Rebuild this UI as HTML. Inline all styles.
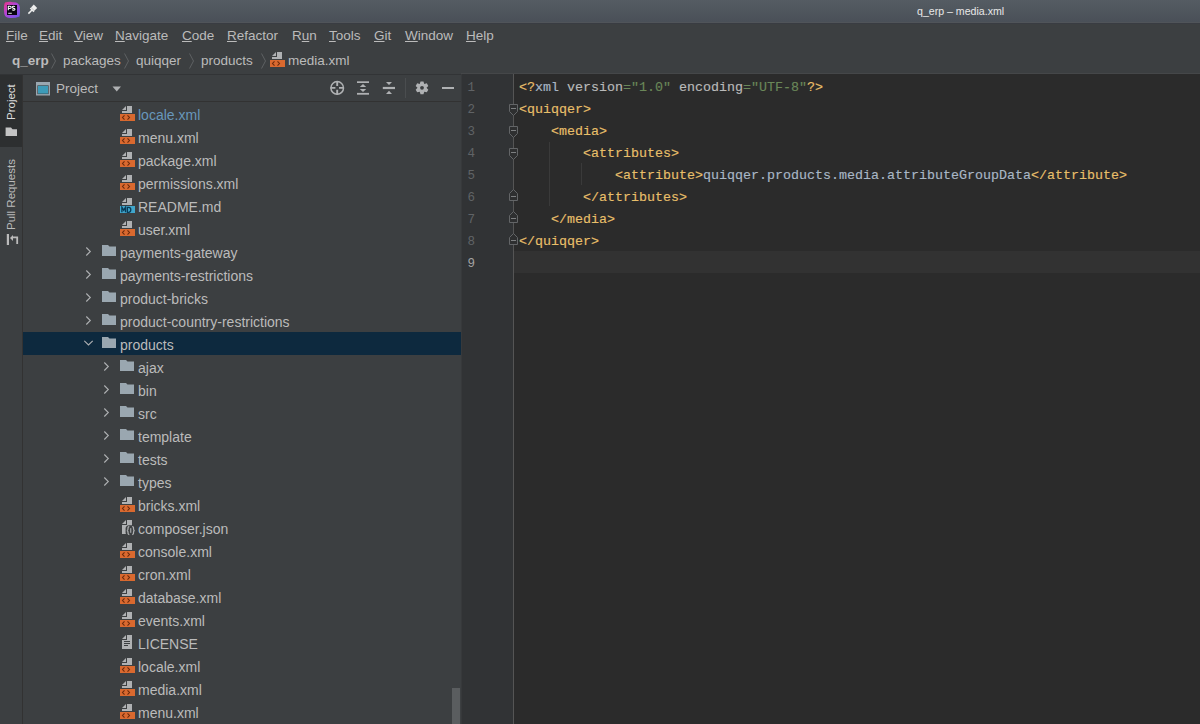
<!DOCTYPE html>
<html><head><meta charset="utf-8">
<style>
*{margin:0;padding:0;box-sizing:border-box}
html,body{width:1200px;height:724px;overflow:hidden;background:#3c3f41;font-family:"Liberation Sans",sans-serif;}
.abs{position:absolute}
#title{left:0;top:0;width:1200px;height:23px;background:linear-gradient(#555c63,#4a5058 95%,#505459 95%);}
#title .t{position:absolute;left:917px;top:4.5px;font-size:10.6px;color:#e8e8e8;white-space:nowrap}
#menu{left:0;top:23px;width:1200px;height:25px;background:#3c3f41;}
#menu span{position:absolute;top:5px;font-size:13.5px;color:#bbbbbb;white-space:nowrap}
#crumb{left:0;top:48px;width:1200px;height:26px;background:#3c3f41}
#crumb span{position:absolute;top:5px;font-size:13.5px;color:#bbbbbb;white-space:nowrap}
#strip{left:0;top:74px;width:23px;height:650px;background:#3c3f41;border-right:1px solid #323232}
#panel{left:23px;top:74px;width:438px;height:650px;background:#3c3f41;overflow:hidden}
#phead{left:0;top:0;width:438px;height:28px;border-bottom:1px solid #323232}
.row{position:absolute;left:0;width:438px;height:23px}
.row.sel{background:#0d293e}
.row span{position:absolute;top:5px;font-size:14px;color:#bbbbbb;white-space:nowrap}
.ic{position:absolute;top:0}
.vt{font-size:11.5px;white-space:nowrap;transform-origin:0 0;transform:rotate(-90deg)}
#gutter{left:461px;top:74px;width:53px;height:650px;background:#313335;border-left:1px solid #37393b}
#gline{left:513px;top:74px;width:1px;height:650px;background:#555555}
#editor{left:514px;top:74px;width:686px;height:650px;background:#2b2b2b}
.cur{position:absolute;left:0;top:177px;width:686px;height:22px;background:#323232}
.ln{position:absolute;left:0;width:13px;text-align:right;font-family:"Liberation Mono",monospace;font-size:12.5px;color:#606366;line-height:22px}
.code{position:absolute;left:5px;font-family:"Liberation Mono",monospace;font-size:13.33px;white-space:pre;color:#a9b7c6;line-height:22px;-webkit-text-stroke:0.15px currentColor}
.tg{color:#e8bf6a}.av{color:#6a8759}.an{color:#bababa}
</style></head><body>
<svg width="0" height="0" style="position:absolute">
<defs>
<symbol id="file" viewBox="0 0 16 23">
 <path d="M2 8 L6 4 L6 8 Z" fill="#afb1b3"/>
 <rect x="7" y="4" width="5" height="7" fill="#afb1b3"/>
 <rect x="2" y="9" width="10" height="2" fill="#afb1b3"/>
</symbol>
<symbol id="xml" viewBox="0 0 16 23">
 <use href="#file"/>
 <rect x="0" y="12" width="15" height="7" fill="#d9692f"/>
 <path d="M4.5 13.3 L2.5 15.5 L4.5 17.7 M7.5 13.3 L9.5 15.5 L7.5 17.7" stroke="#6b2a0c" stroke-width="1.1" fill="none"/>
</symbol>
<symbol id="md" viewBox="0 0 16 23">
 <use href="#file"/>
 <rect x="0" y="12" width="15" height="7" fill="#40a6cc"/>
 <path d="M1.9 18.3 V13.4 L3.7 16.2 L5.5 13.4 V18.3 M7.4 18.3 V13.4 H8.8 Q10.8 13.4 10.8 15.85 Q10.8 18.3 8.8 18.3 Z" stroke="#083b58" stroke-width="1.35" fill="none"/>
</symbol>
<symbol id="txt" viewBox="0 0 16 23">
 <path d="M2 8 L6 4 L6 8 Z" fill="#afb1b3"/>
 <path d="M7 4 H12 V18 H2 V9 H7 Z" fill="#afb1b3"/>
 <rect x="4" y="10" width="6" height="1" fill="#3c3f41"/>
 <rect x="4" y="12" width="6" height="1" fill="#3c3f41"/>
 <rect x="4" y="14" width="4" height="1" fill="#3c3f41"/>
</symbol>
<symbol id="json" viewBox="0 0 16 23">
 <path d="M2 8 L6 4 L6 8 Z" fill="#afb1b3"/>
 <path d="M7 4 H12 V18 H2 V9 H7 Z" fill="#afb1b3"/>
 <rect x="5.6" y="9.2" width="10.3" height="10.6" rx="3.5" fill="#3c3f41"/>
 <path d="M9.3 10.5 C7.8 10.5 8 12 8 13 C8 14 7.5 14.5 6.8 14.5 C7.5 14.5 8 15 8 16 C8 17 7.8 18.5 9.3 18.5 M12.2 10.5 C13.7 10.5 13.5 12 13.5 13 C13.5 14 14 14.5 14.7 14.5 C14 14.5 13.5 15 13.5 16 C13.5 17 13.7 18.5 12.2 18.5" stroke="#afb1b3" stroke-width="1.25" fill="none"/>
 <rect x="10.2" y="12.2" width="1.1" height="4.6" fill="#afb1b3"/>
</symbol>
<symbol id="folder" viewBox="0 0 16 23">
 <path d="M0 5 H6 L7.5 6.5 H14 V16 H0 Z" fill="#9aa7b0"/>
</symbol>
<symbol id="chevr" viewBox="0 0 16 23">
 <path d="M2.3 7.5 L6.3 11.5 L2.3 15.5" stroke="#afb1b3" stroke-width="1.1" fill="none"/>
</symbol>
<symbol id="chevd" viewBox="0 0 16 23">
 <path d="M0.3 8.8 L4.5 13 L8.7 8.8" stroke="#afb1b3" stroke-width="1.1" fill="none"/>
</symbol>
<symbol id="foldopen" viewBox="0 0 11 22">
 <path d="M1.5 7.5 H9.5 V14.5 L5.5 18.5 L1.5 14.5 Z" stroke="#636567" stroke-width="1" fill="#2e2f30"/>
 <path d="M3 11.5 H8" stroke="#7d7f81" stroke-width="1"/>
</symbol>
<symbol id="foldclose" viewBox="0 0 11 22">
 <path d="M1.5 15.5 H9.5 V8.5 L5.5 4.5 L1.5 8.5 Z" stroke="#636567" stroke-width="1" fill="#2e2f30"/>
 <path d="M3 11.5 H8" stroke="#7d7f81" stroke-width="1"/>
</symbol>
</defs>
</svg>
<div id="title" class="abs">
 <svg class="abs" style="left:3px;top:1px" width="18" height="18" viewBox="0 0 18 18">
  <defs><linearGradient id="psg" x1="0" y1="0" x2="1" y2="1"><stop offset="0" stop-color="#ff318c"/><stop offset="0.45" stop-color="#b845e6"/><stop offset="1" stop-color="#6b57ff"/></linearGradient></defs>
  <path d="M2 1.5 Q7 0.3 10 1.2 Q16 0.8 16.8 6 Q17.5 12 16.5 15.5 Q11 17.8 5 16.8 Q1 16 1 10 Q0.6 4 2 1.5Z" fill="url(#psg)" opacity="0.9"/>
  <rect x="4" y="4" width="10" height="10" fill="#0a0612"/>
  <path d="M5.3 9.2 V5.2 H6.9 Q8.2 5.2 8.2 6.35 Q8.2 7.5 6.9 7.5 H5.3" stroke="#fff" stroke-width="1.1" fill="none"/>
  <path d="M11.9 5.6 Q11.4 5.1 10.4 5.2 Q9.2 5.4 9.4 6.4 Q9.6 7.2 10.7 7.4 Q12.1 7.7 11.9 8.6 Q11.6 9.4 10.4 9.3 Q9.6 9.2 9.2 8.7" stroke="#fff" stroke-width="1.1" fill="none"/>
  <rect x="5.2" y="11.8" width="3.6" height="0.9" fill="#fff"/>
 </svg>
 <svg class="abs" style="left:27px;top:3px" width="12" height="12" viewBox="0 0 12 12">
  <path d="M6.8 1.6 L10.2 5 L7.4 7.8 L4 4.4 Z" fill="#eeeeee"/>
  <path d="M3.4 5 L7 8.6" stroke="#eeeeee" stroke-width="1.7"/>
  <path d="M5 7 L1.4 10.6" stroke="#eeeeee" stroke-width="1.5"/>
 </svg>
 <span class="t">q_erp – media.xml</span>
</div>
<div id="menu" class="abs">
<span style="left:6px"><u>F</u>ile</span>
<span style="left:39px"><u>E</u>dit</span>
<span style="left:74px"><u>V</u>iew</span>
<span style="left:115px"><u>N</u>avigate</span>
<span style="left:182px"><u>C</u>ode</span>
<span style="left:227px"><u>R</u>efactor</span>
<span style="left:292px">R<u>u</u>n</span>
<span style="left:329px"><u>T</u>ools</span>
<span style="left:374px"><u>G</u>it</span>
<span style="left:405px"><u>W</u>indow</span>
<span style="left:466px"><u>H</u>elp</span>
</div>
<div class="abs" style="left:0;top:23px;width:1200px;height:1px;background:#393c42;z-index:2"></div>
<div id="crumb" class="abs">
<span style="left:12px;font-weight:bold">q_erp</span>
<svg class="abs" style="left:50px;top:4px" width="8" height="18"><path d="M1.5 1.5 L5.5 9 L1.5 16.5" stroke="#5e6163" stroke-width="1" fill="none"/></svg>
<span style="left:63px">packages</span>
<svg class="abs" style="left:123px;top:4px" width="8" height="18"><path d="M1.5 1.5 L5.5 9 L1.5 16.5" stroke="#5e6163" stroke-width="1" fill="none"/></svg>
<span style="left:136px">quiqqer</span>
<svg class="abs" style="left:188px;top:4px" width="8" height="18"><path d="M1.5 1.5 L5.5 9 L1.5 16.5" stroke="#5e6163" stroke-width="1" fill="none"/></svg>
<span style="left:201px">products</span>
<svg class="abs" style="left:260px;top:4px" width="8" height="18"><path d="M1.5 1.5 L5.5 9 L1.5 16.5" stroke="#5e6163" stroke-width="1" fill="none"/></svg>
<svg class="abs" style="left:270px;top:48px;top:0" width="16" height="23"><use href="#xml"/></svg>
<span style="left:288px">media.xml</span>
</div>
<div id="strip" class="abs">
 <div class="abs" style="left:0;top:0;width:22px;height:73px;background:#2d2f30"></div>
 <div class="abs vt" style="left:5px;top:46px;color:#dddddd">Project</div>
 <svg class="abs" style="left:5px;top:53px" width="13" height="10" viewBox="0 0 13 10"><path d="M0.6 0.5 H6 L7.5 2.2 H12 V9 H0.6Z" fill="#c4c4c4"/></svg>
 <div class="abs vt" style="left:5px;top:156px;color:#bbbbbb">Pull Requests</div>
 <svg class="abs" style="left:5px;top:158px" width="14" height="13" viewBox="0 0 14 13">
  <rect x="1.8" y="2" width="2.2" height="11" fill="#bbbbbb"/>
  <path d="M5 6 L8 3 V9Z" fill="#bbbbbb"/>
  <path d="M7 5.3 H12.2 V12" stroke="#bbbbbb" stroke-width="1.8" fill="none"/>
 </svg>
</div>
<div id="panel" class="abs">
<div id="phead" class="abs">
 <svg class="abs" style="left:12px;top:7px" width="16" height="16" viewBox="0 0 16 16">
  <rect x="1" y="1" width="14" height="13.5" fill="#9aa7b0"/>
  <rect x="2.4" y="4.3" width="11.2" height="8.8" fill="#3c3f41"/>
  <rect x="3" y="4.8" width="10" height="7.8" fill="#3d9bb8"/>
 </svg>
 <span class="abs" style="left:33px;top:7px;font-size:13.5px;color:#bbbbbb">Project</span>
 <svg class="abs" style="left:89px;top:12px" width="10" height="6"><path d="M0.5 0.5 H9 L4.75 5.5Z" fill="#afb1b3"/></svg>
 <svg class="abs" style="left:306px;top:6px" width="16" height="16" viewBox="0 0 16 16">
  <circle cx="8.2" cy="7.9" r="6.3" stroke="#afb1b3" stroke-width="1.5" fill="none"/>
  <path d="M1.5 7.9 H6.4 M10 7.9 H14.9 M8.2 1.2 V6.1 M8.2 9.7 V14.6" stroke="#afb1b3" stroke-width="1.9"/>
 </svg>
 <svg class="abs" style="left:332px;top:6px" width="16" height="16" viewBox="0 0 16 16">
  <rect x="2" y="1.3" width="12" height="1.7" fill="#afb1b3"/>
  <rect x="2" y="12.9" width="12" height="1.8" fill="#afb1b3"/>
  <path d="M4.8 7 L8 4.1 L11.2 7Z M4.8 9 L8 11.9 L11.2 9Z" fill="#afb1b3"/>
 </svg>
 <svg class="abs" style="left:359px;top:6px" width="16" height="16" viewBox="0 0 16 16">
  <rect x="0.8" y="6.9" width="12.2" height="2.2" fill="#afb1b3"/>
  <path d="M4 2 L10 2 L7 5Z M4 14 L10 14 L7 10.7Z" fill="#afb1b3"/>
 </svg>
 <div class="abs" style="left:382px;top:4px;width:1px;height:20px;background:#4a4d4f"></div>
 <svg class="abs" style="left:391px;top:6px" width="16" height="16" viewBox="0 0 16 16">
  <path id="gear" d="M10.25 3.95 L9.48 1.42 L6.52 1.42 L5.75 3.95 L5.75 3.95 L3.17 3.35 L1.69 5.92 L3.50 7.85 L3.50 7.85 L1.69 9.78 L3.17 12.35 L5.75 11.75 L5.75 11.75 L6.52 14.28 L9.48 14.28 L10.25 11.75 L10.25 11.75 L12.83 12.35 L14.31 9.78 L12.50 7.85 L12.50 7.85 L14.31 5.92 L12.83 3.35 L10.25 3.95Z" fill="#afb1b3"/>
  <circle cx="8" cy="7.85" r="1.9" fill="#3c3f41"/>
 </svg>
 <div class="abs" style="left:419px;top:13px;width:12px;height:2px;background:#afb1b3"></div>
</div>
<div class="row" style="top:28px"><svg class="ic" style="left:97px" width="16" height="23"><use href="#xml"/></svg><span style="left:115px;color:#6897bb">locale.xml</span></div>
<div class="row" style="top:51px"><svg class="ic" style="left:97px" width="16" height="23"><use href="#xml"/></svg><span style="left:115px">menu.xml</span></div>
<div class="row" style="top:74px"><svg class="ic" style="left:97px" width="16" height="23"><use href="#xml"/></svg><span style="left:115px">package.xml</span></div>
<div class="row" style="top:97px"><svg class="ic" style="left:97px" width="16" height="23"><use href="#xml"/></svg><span style="left:115px">permissions.xml</span></div>
<div class="row" style="top:120px"><svg class="ic" style="left:97px" width="16" height="23"><use href="#md"/></svg><span style="left:115px">README.md</span></div>
<div class="row" style="top:143px"><svg class="ic" style="left:97px" width="16" height="23"><use href="#xml"/></svg><span style="left:115px">user.xml</span></div>
<div class="row" style="top:166px"><svg class="ic" style="left:61px" width="16" height="23"><use href="#chevr"/></svg><svg class="ic" style="left:79px" width="16" height="23"><use href="#folder"/></svg><span style="left:97px">payments-gateway</span></div>
<div class="row" style="top:189px"><svg class="ic" style="left:61px" width="16" height="23"><use href="#chevr"/></svg><svg class="ic" style="left:79px" width="16" height="23"><use href="#folder"/></svg><span style="left:97px">payments-restrictions</span></div>
<div class="row" style="top:212px"><svg class="ic" style="left:61px" width="16" height="23"><use href="#chevr"/></svg><svg class="ic" style="left:79px" width="16" height="23"><use href="#folder"/></svg><span style="left:97px">product-bricks</span></div>
<div class="row" style="top:235px"><svg class="ic" style="left:61px" width="16" height="23"><use href="#chevr"/></svg><svg class="ic" style="left:79px" width="16" height="23"><use href="#folder"/></svg><span style="left:97px">product-country-restrictions</span></div>
<div class="row sel" style="top:258px"><svg class="ic" style="left:61px" width="16" height="23"><use href="#chevd"/></svg><svg class="ic" style="left:79px" width="16" height="23"><use href="#folder"/></svg><span style="left:97px">products</span></div>
<div class="row" style="top:281px"><svg class="ic" style="left:79px" width="16" height="23"><use href="#chevr"/></svg><svg class="ic" style="left:97px" width="16" height="23"><use href="#folder"/></svg><span style="left:115px">ajax</span></div>
<div class="row" style="top:304px"><svg class="ic" style="left:79px" width="16" height="23"><use href="#chevr"/></svg><svg class="ic" style="left:97px" width="16" height="23"><use href="#folder"/></svg><span style="left:115px">bin</span></div>
<div class="row" style="top:327px"><svg class="ic" style="left:79px" width="16" height="23"><use href="#chevr"/></svg><svg class="ic" style="left:97px" width="16" height="23"><use href="#folder"/></svg><span style="left:115px">src</span></div>
<div class="row" style="top:350px"><svg class="ic" style="left:79px" width="16" height="23"><use href="#chevr"/></svg><svg class="ic" style="left:97px" width="16" height="23"><use href="#folder"/></svg><span style="left:115px">template</span></div>
<div class="row" style="top:373px"><svg class="ic" style="left:79px" width="16" height="23"><use href="#chevr"/></svg><svg class="ic" style="left:97px" width="16" height="23"><use href="#folder"/></svg><span style="left:115px">tests</span></div>
<div class="row" style="top:396px"><svg class="ic" style="left:79px" width="16" height="23"><use href="#chevr"/></svg><svg class="ic" style="left:97px" width="16" height="23"><use href="#folder"/></svg><span style="left:115px">types</span></div>
<div class="row" style="top:419px"><svg class="ic" style="left:97px" width="16" height="23"><use href="#xml"/></svg><span style="left:115px">bricks.xml</span></div>
<div class="row" style="top:442px"><svg class="ic" style="left:97px" width="16" height="23"><use href="#json"/></svg><span style="left:115px">composer.json</span></div>
<div class="row" style="top:465px"><svg class="ic" style="left:97px" width="16" height="23"><use href="#xml"/></svg><span style="left:115px">console.xml</span></div>
<div class="row" style="top:488px"><svg class="ic" style="left:97px" width="16" height="23"><use href="#xml"/></svg><span style="left:115px">cron.xml</span></div>
<div class="row" style="top:511px"><svg class="ic" style="left:97px" width="16" height="23"><use href="#xml"/></svg><span style="left:115px">database.xml</span></div>
<div class="row" style="top:534px"><svg class="ic" style="left:97px" width="16" height="23"><use href="#xml"/></svg><span style="left:115px">events.xml</span></div>
<div class="row" style="top:557px"><svg class="ic" style="left:97px" width="16" height="23"><use href="#txt"/></svg><span style="left:115px">LICENSE</span></div>
<div class="row" style="top:580px"><svg class="ic" style="left:97px" width="16" height="23"><use href="#xml"/></svg><span style="left:115px">locale.xml</span></div>
<div class="row" style="top:603px"><svg class="ic" style="left:97px" width="16" height="23"><use href="#xml"/></svg><span style="left:115px">media.xml</span></div>
<div class="row" style="top:626px"><svg class="ic" style="left:97px" width="16" height="23"><use href="#xml"/></svg><span style="left:115px">menu.xml</span></div>
<div class="abs" style="left:429px;top:614px;width:8px;height:36px;background:#5a5d5f"></div>
</div>
<div class="abs" style="left:0;top:74px;width:461px;height:1px;background:#323436;z-index:3"></div>
<div class="abs" style="left:461px;top:73px;width:739px;height:1px;background:#454749;z-index:3"></div>
<div id="gutter" class="abs">
 <div class="ln" style="top:3px">1</div>
 <div class="ln" style="top:25px">2</div>
 <div class="ln" style="top:47px">3</div>
 <div class="ln" style="top:69px">4</div>
 <div class="ln" style="top:91px">5</div>
 <div class="ln" style="top:113px">6</div>
 <div class="ln" style="top:135px">7</div>
 <div class="ln" style="top:157px">8</div>
 <div class="ln" style="top:179px;color:#a4a3a3">9</div>
</div>
<div id="editor" class="abs">
 <div class="cur"></div>
 <div class="code" style="top:3px"><span class="tg">&lt;?</span>xml <span class="an">version</span><span class="av">="1.0"</span> <span class="an">encoding</span><span class="av">="UTF-8"</span><span class="tg">?&gt;</span>
<span class="tg">&lt;quiqqer&gt;</span>
    <span class="tg">&lt;media&gt;</span>
        <span class="tg">&lt;attributes&gt;</span>
            <span class="tg">&lt;attribute&gt;</span>quiqqer.products.media.attributeGroupData<span class="tg">&lt;/attribute&gt;</span>
        <span class="tg">&lt;/attributes&gt;</span>
    <span class="tg">&lt;/media&gt;</span>
<span class="tg">&lt;/quiqqer&gt;</span>
</div>
</div>
<div id="gline" class="abs"></div>
<div class="abs" style="left:549px;top:142px;width:1px;height:64px;background:#3a3a3a"></div>
<div class="abs" style="left:581px;top:163px;width:1px;height:22px;background:#3a3a3a"></div>
<svg class="abs" style="left:508px;top:97px" width="11" height="22"><use href="#foldopen"/></svg>
<svg class="abs" style="left:508px;top:119px" width="11" height="22"><use href="#foldopen"/></svg>
<svg class="abs" style="left:508px;top:141px" width="11" height="22"><use href="#foldopen"/></svg>
<svg class="abs" style="left:508px;top:185px" width="11" height="22"><use href="#foldclose"/></svg>
<svg class="abs" style="left:508px;top:207px" width="11" height="22"><use href="#foldclose"/></svg>
<svg class="abs" style="left:508px;top:229px" width="11" height="22"><use href="#foldclose"/></svg>
</body></html>
